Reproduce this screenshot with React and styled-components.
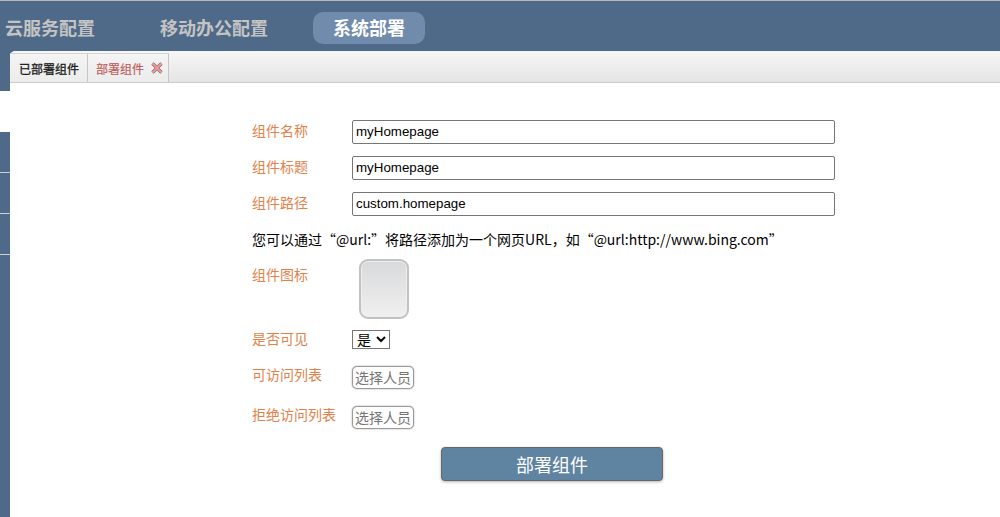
import React from 'react';
import styled, { createGlobalStyle } from 'styled-components';

const FONT = '"Liberation Sans", "Noto Sans CJK SC", sans-serif';
const CJK_FIRST = '"Noto Sans CJK SC", "Liberation Sans", sans-serif';

const GlobalStyle = createGlobalStyle`
  html, body {
    margin: 0;
    padding: 0;
    background: #fff;
    overflow: hidden;
  }
  body {
    font-family: ${FONT};
  }
`;

const Page = styled.div`
  width: 1000px;
  height: 517px;
  display: flex;
  flex-direction: column;
  overflow: hidden;
`;

const Header = styled.header`
  height: 51px;
  box-sizing: border-box;
  flex: none;
  border-top: 1px solid #b9b9b9;
  background: #4f6a88;
  display: flex;
  align-items: flex-start;
  gap: 25px;
  padding-top: 11px;
  margin-left: -15px;
`;

const NavItem = styled.div`
  height: 32px;
  line-height: 35px;
  padding: 0 20px;
  border-radius: 10px;
  font-size: 18px;
  font-weight: bold;
  color: ${(p) => (p.$active ? '#fff' : '#c4c4c4')};
  background: ${(p) => (p.$active ? '#708bab' : 'transparent')};
`;

const Body = styled.div`
  flex: 1;
  display: flex;
  min-height: 0;
`;

const Side = styled.aside`
  width: 10px;
  flex: none;
  display: flex;
  flex-direction: column;
`;

const SideCap = styled.div`
  height: 40px;
  background: #4f6a88;
`;

const SideGap = styled.div`
  height: 41px;
`;

const SideItem = styled.div`
  height: 40px;
  flex: none;
  background: #4f6a88;
  border-bottom: 1px solid #cfcfcf;
`;

const SideRest = styled.div`
  flex: 1;
  background: #4f6a88;
`;

const Main = styled.main`
  flex: 1;
  display: flex;
  flex-direction: column;
  min-width: 0;
  background: #4f6a88;
`;

const TabBar = styled.div`
  height: 32px;
  box-sizing: border-box;
  flex: none;
  display: flex;
  align-items: flex-end;
  border-radius: 5px 0 0 0;
  border-bottom: 1px solid #cccccc;
  background: linear-gradient(#f7f7f7, #e4e4e4);
`;

const Tab = styled.div`
  height: 29px;
  box-sizing: border-box;
  display: flex;
  align-items: center;
  gap: 7px;
  padding: ${(p) => (p.$closable ? '0 5px 0 8px' : '0 8px 0 9px')};
  border-right: 1px solid #c6c6c6;
  border-top: 1px solid #d4d4d4;
  background: linear-gradient(#f4f4f4, #ececec);
  font-size: 12px;
  -webkit-text-stroke: ${(p) => (p.$closable ? '0.15px' : '0.3px')};
  color: ${(p) => (p.$closable ? '#bf5a5a' : '#222')};
`;

const CloseIcon = styled.svg`
  width: 12px;
  height: 12px;
  flex: none;
  display: block;
`;

const Content = styled.div`
  flex: 1;
  background: #fff;
  padding: 37px 0 0 242px;
`;

const FieldRow = styled.div`
  display: flex;
  align-items: flex-start;
  margin-bottom: ${(p) => p.$mb ?? 12}px;
`;

const Label = styled.label`
  width: 100px;
  flex: none;
  font-size: 14px;
  line-height: ${(p) => p.$lh ?? 20}px;
  color: #e0824a;
  padding-top: ${(p) => p.$pt ?? 1}px;
`;

const TextField = styled.input`
  width: 483px;
  height: 24px;
  box-sizing: border-box;
  padding: 0 3px 2px;
  border: 1px solid #767676;
  border-radius: 2px;
  background: #fff;
  font-family: ${FONT};
  font-size: 13.33px;
  color: #000;
  outline: none;
`;

const Note = styled.p`
  margin: 0 0 9px;
  font-family: ${CJK_FIRST};
  font-size: 14px;
  line-height: 22px;
  color: #000;
  white-space: nowrap;
`;

const IconBox = styled.div`
  width: 50px;
  height: 60px;
  box-sizing: border-box;
  margin-left: 7px;
  border: 2px solid #c2c2c2;
  border-radius: 9px;
  background: linear-gradient(#d8d9db, #f0f0f0);
  box-shadow: inset 0 0 0 1px #eeeeee;
`;

const Select = styled.select`
  width: 38px;
  height: 19px;
  box-sizing: border-box;
  border: 1px solid #767676;
  border-radius: 0;
  background: #fff;
  padding: 0;
  font-family: ${FONT};
  font-size: 14px;
  color: #000;
`;

const PickButton = styled.div`
  width: 62px;
  height: 23px;
  box-sizing: border-box;
  border: 1px solid #9a9a9a;
  border-radius: 5px;
  background: #fff;
  box-shadow: 0 0 1.5px #8a8a8a;
  font-size: 14px;
  line-height: 22px;
  text-align: center;
  white-space: nowrap;
  color: #757575;
`;

const SubmitRow = styled.div`
  padding: 0 0 0 189px;
`;

const SubmitButton = styled.button`
  width: 222px;
  height: 34px;
  box-sizing: border-box;
  padding: 0;
  border: 1px solid #666666;
  border-radius: 4px;
  background: #5f84a2;
  box-shadow: 0 1px 3px rgba(0, 0, 0, 0.3);
  font-family: ${FONT};
  font-size: 18px;
  color: #fff;
`;

export default function App() {
  return (
    <Page>
      <GlobalStyle />
      <Header>
        <NavItem>云服务配置</NavItem>
        <NavItem>移动办公配置</NavItem>
        <NavItem $active>系统部署</NavItem>
      </Header>
      <Body>
        <Side>
          <SideCap />
          <SideGap />
          <SideItem />
          <SideItem />
          <SideItem />
          <SideRest />
        </Side>
        <Main>
          <TabBar>
            <Tab>已部署组件</Tab>
            <Tab $closable>
              部署组件
              <CloseIcon viewBox="0 0 12 12">
                <path d="M1.5 1.5 L10.5 10.5 M10.5 1.5 L1.5 10.5" stroke="#7d6a6a" strokeWidth="3.2" />
                <path d="M1.5 1.5 L10.5 10.5 M10.5 1.5 L1.5 10.5" stroke="#f59a9a" strokeWidth="1.8" />
              </CloseIcon>
            </Tab>
          </TabBar>
          <Content>
            <FieldRow>
              <Label>组件名称</Label>
              <TextField defaultValue="myHomepage" />
            </FieldRow>
            <FieldRow>
              <Label>组件标题</Label>
              <TextField defaultValue="myHomepage" />
            </FieldRow>
            <FieldRow>
              <Label>组件路径</Label>
              <TextField defaultValue="custom.homepage" />
            </FieldRow>
            <Note>您可以通过“@url:”将路径添加为一个网页URL，如“@url:http://www.bing.com”</Note>
            <FieldRow $mb={11}>
              <Label $pt={6}>组件图标</Label>
              <IconBox />
            </FieldRow>
            <FieldRow $mb={17}>
              <Label $pt={0} $lh={18}>是否可见</Label>
              <Select defaultValue="yes">
                <option value="yes">是</option>
                <option value="no">否</option>
              </Select>
            </FieldRow>
            <FieldRow $mb={17}>
              <Label $pt={0} $lh={18}>可访问列表</Label>
              <PickButton>选择人员</PickButton>
            </FieldRow>
            <FieldRow $mb={18}>
              <Label $pt={0} $lh={18}>拒绝访问列表</Label>
              <PickButton>选择人员</PickButton>
            </FieldRow>
            <SubmitRow>
              <SubmitButton>部署组件</SubmitButton>
            </SubmitRow>
          </Content>
        </Main>
      </Body>
    </Page>
  );
}
